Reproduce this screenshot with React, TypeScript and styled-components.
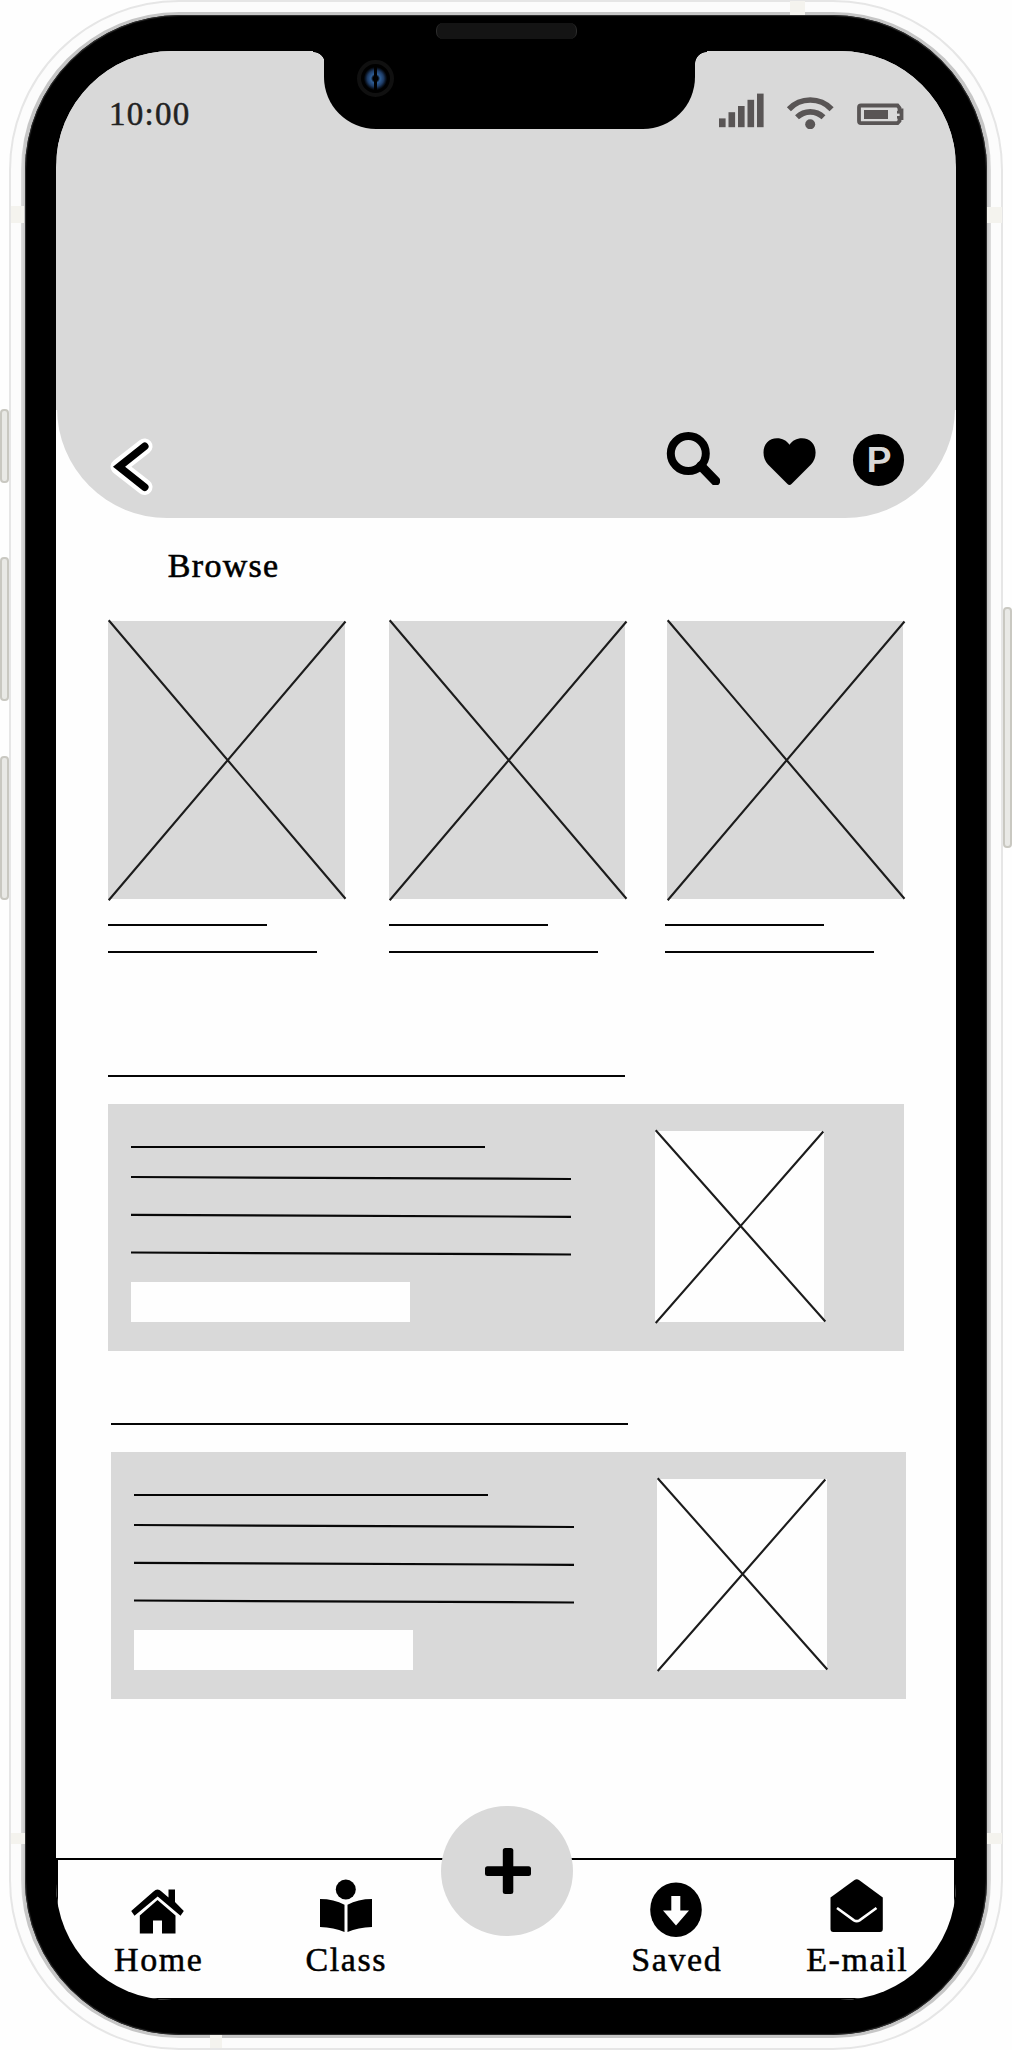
import React from "react";
import styled, { createGlobalStyle } from "styled-components";

const GREY = "#d9d9d9";
const STATUS = "#595555";

const GlobalStyle = createGlobalStyle`
  *, *::before, *::after { box-sizing: border-box; }
  body { margin: 0; background: #fefefe; font-family: "Liberation Serif", serif; }
  svg { display: block; flex: none; }
`;

const Page = styled.main`
  position: relative;
  width: 1012px;
  height: 2050px;
  padding: 0 9px;
  overflow: hidden;
`;

const Frame = styled.div`
  width: 994px;
  height: 2050px;
  padding: 10px;
  border: 2px solid #e6e6e6;
  border-radius: 170px;
  background: #fcfcfc;
`;

const Rim = styled.div`
  height: 2026px;
  padding: 3px 4px;
  border-radius: 158px;
  background: linear-gradient(90deg, #dedede, #c6c6c6 4px, #c6c6c6 966px, #dedede);
`;

const Bezel = styled.div`
  position: relative;
  height: 2020px;
  padding: 36px 31px 35px;
  border-radius: 155px;
  background: #000;
  box-shadow: inset 0 0 1px 1px #303030;
`;

const Screen = styled.div`
  display: flex;
  flex-direction: column;
  width: 900px;
  height: 1949px;
  overflow: hidden;
  border-radius: 116px;
  background: linear-gradient(${GREY} 359px, #fefefe 359px 1810px, #000 1810px);
`;

const SideButton = styled.div<{ $top: number; $height: number; $right?: boolean }>`
  position: absolute;
  top: ${(p) => p.$top}px;
  ${(p) => (p.$right ? "left: 1003px;" : "left: 0;")}
  width: 9px;
  height: ${(p) => p.$height}px;
  border: 2px solid #c9c8c1;
  border-radius: 4px;
  background: #e9e9e6;
`;

const Band = styled.div<{ $x: number; $y: number; $w: number; $h: number }>`
  position: absolute;
  left: ${(p) => p.$x}px;
  top: ${(p) => p.$y}px;
  width: ${(p) => p.$w}px;
  height: ${(p) => p.$h}px;
  background: #f4f3ee;
`;

const Notch = styled.div`
  position: absolute;
  top: 35px;
  left: 299px;
  width: 371px;
  height: 78.5px;
  border-radius: 0 0 52px 52px;
  background: #000;
  &::before, &::after {
    content: "";
    position: absolute;
    top: 1px;
    width: 12px;
    height: 13px;
  }
  &::before {
    left: -11.5px;
    background: radial-gradient(circle at 0 100%, transparent 11.5px, #000 12.2px);
  }
  &::after {
    right: -11.5px;
    background: radial-gradient(circle at 100% 100%, transparent 11.5px, #000 12.2px);
  }
`;

const Speaker = styled.div`
  position: absolute;
  top: 8px;
  left: 411px;
  width: 141px;
  height: 16px;
  border: solid #2c2c2c;
  border-width: 0 1px;
  border-radius: 7px;
  background: #141414;
  z-index: 1;
`;

const Camera = styled.div`
  position: absolute;
  top: 10px;
  left: 33px;
  width: 37px;
  height: 37px;
  padding: 3px;
  border: 4px solid #101010;
  border-radius: 50%;
`;

const Lens = styled.div`
  height: 23px;
  border-radius: 50%;
  background:
    radial-gradient(circle, #000 2.5px, transparent 4.5px),
    linear-gradient(90deg, transparent 9.5px, #000 10.5px 12.5px, transparent 13.5px),
    radial-gradient(circle, #2d5a90 5px, #1e3c66 8px, #08101c 10.5px, #000 12px);
`;

const Hero = styled.header`
  display: flex;
  flex-direction: column;
  justify-content: space-between;
  flex: none;
  height: 467px;
  margin: 0 1px;
  border-radius: 0 0 110px 110px;
  background: ${GREY};
`;

const UpperScreen = styled.div`
  flex: 1;
  background: linear-gradient(transparent 359px, #fefefe 359px);
`;

const StatusBar = styled.div`
  display: flex;
  align-items: flex-start;
  justify-content: space-between;
  padding: 40px 51px 0 52px;
`;

const Time = styled.time`
  padding-top: 4px;
  font-size: 33px;
  line-height: 38px;
  letter-spacing: 1.3px;
  color: #222;
  -webkit-text-stroke: 0.5px #222;
`;

const StatusIcons = styled.div`
  display: flex;
  gap: 20px;
`;

const HeroActions = styled.div`
  display: flex;
  align-items: flex-start;
  justify-content: space-between;
  height: 87px;
  padding: 0 51px 0 48px;
`;

const ActionGroup = styled.div`
  display: flex;
  gap: 41.5px;
`;

const IconButton = styled.button<{ $drop?: number }>`
  padding: ${(p) => p.$drop ?? 0}px 0 0;
  border: 0;
  background: none;
  color: #000;
`;

const PBadge = styled.span`
  display: flex;
  align-items: center;
  justify-content: center;
  width: 51.5px;
  height: 51.5px;
  margin: 3px 0 0 -4.5px;
  padding-left: 2px;
  border-radius: 50%;
  background: #000;
  color: ${GREY};
  font: 600 34px/52px Inter, sans-serif;
`;

const PLetter = styled.span`
  transform: scaleX(1.17);
`;

const Content = styled.section`
  padding: 0 0 0 52.3px;
`;

const Heading = styled.h1`
  margin: 29px 0 0 59.500px;
  font-size: 34px;
  font-weight: 400;
  line-height: 38px;
  letter-spacing: 1.3px;
  color: #000;
  -webkit-text-stroke: 0.6px #000;
`;

const Gallery = styled.div`
  display: grid;
  grid-template-columns: 280.7px 278px 237px;
  margin-top: 35.7px;
`;

const Card = styled.article`
  display: flex;
  flex-direction: column;
`;

const Placeholder = styled.div<{ $w: number; $h: number; $light?: boolean }>`
  flex: none;
  width: ${(p) => p.$w}px;
  height: ${(p) => p.$h}px;
  background: ${(p) => (p.$light ? "#fefefe" : GREY)};
  svg { overflow: visible; }
`;

const Captions = styled.div<{ $shift?: number }>`
  display: flex;
  flex-direction: column;
  gap: 25.2px;
  margin: 25.3px 0 0 ${(p) => p.$shift ?? 0}px;
`;

const Rule = styled.div<{ $w: number }>`
  width: ${(p) => p.$w}px;
  height: 2px;
  background: #050505;
`;

const Feature = styled.article<{ $gap: number; $shift?: number }>`
  display: flex;
  flex-direction: column;
  gap: 27.200px;
  margin: ${(p) => p.$gap}px 0 0 ${(p) => p.$shift ?? 0}px;
`;

const Panel = styled.div`
  display: flex;
  align-items: flex-start;
  width: 795.7px;
  height: 247.3px;
  padding: 27px 0 0 23px;
  background: ${GREY};
`;

const PanelText = styled.div`
  display: flex;
  flex-direction: column;
  width: 523.7px;
  padding-top: 15.3px;
`;

const Slants = styled.svg`
  margin-top: 26.700px;
  overflow: visible;
`;

const Field = styled.div`
  width: 279px;
  height: 40px;
  margin-top: 27px;
  background: #fefefe;
`;

const TabBar = styled.nav`
  position: relative;
  display: grid;
  grid-template-columns: 200px 175px 155px 176px 185px;
  flex: none;
  height: 142px;
  border: 2px solid #000;
  background: #fefefe;
`;

const Tab = styled.a<{ $column: number }>`
  grid-column: ${(p) => p.$column};
  display: flex;
  flex-direction: column;
  align-items: center;
  padding-top: 17.5px;
`;

const TabLabel = styled.span`
  margin-top: 3.5px;
  font-size: 34px;
  line-height: 38px;
  letter-spacing: 1.6px;
  margin-right: -1.6px;
  color: #000;
  -webkit-text-stroke: 0.5px #000;
`;

const AddButton = styled.button`
  position: absolute;
  top: -54.5px;
  left: 383px;
  display: flex;
  align-items: center;
  justify-content: center;
  width: 132px;
  height: 130.5px;
  padding: 0 0 0 1px;
  border: 0;
  border-radius: 50%;
  background: ${GREY};
`;

const Crossed = ({ w, h, light }: { w: number; h: number; light?: boolean }) => (
  <Placeholder $w={w} $h={h} $light={light}>
    <svg width={w} height={h} stroke="#1c1c1c" strokeWidth="2.1">
      <path d={`M.7 -.8L${w + 1} ${h - 0.5}M${w + (light ? -1 : 1)} .5L.7 ${h + 1}`} />
    </svg>
  </Placeholder>
);

const Signal = () => (
  <svg width="46" height="38" fill={STATUS}>
    {[0, 1, 2, 3, 4].map((i) => (
      <rect key={i} x={i * 9.5} y={27.4 - i * 6.2} width="6.6" height={8.8 + i * 6.2} />
    ))}
  </svg>
);

const Wifi = () => (
  <svg width="50" height="38" fill="none" stroke={STATUS} strokeWidth="5.6">
    <path d="M3.9 18.2C15.500 6 35 6 46.600 18.200" />
    <path d="M12 26.300C19.500 19 31 19 38.500 26.300" />
    <circle cx="25.200" cy="33.300" r="5" fill={STATUS} stroke="none" />
  </svg>
);

const Battery = () => (
  <svg width="49" height="38" fill={STATUS}>
    <path
      d="M6 14.500H42.500L44.500 17V19.500H46.500V27H44.500V30L42.500 32.200H6Q4 32.200 4 30V16.500Q4 14.500 6 14.500Z"
      fill="none"
      stroke={STATUS}
      strokeWidth="3.800"
    />
    <rect x="9" y="19" width="24" height="9" />
    <rect x="42" y="20" width="4" height="2.600" />
    <rect x="42" y="25" width="4" height="2.600" />
  </svg>
);

const BackArrow = () => (
  <svg width="48" height="60" viewBox="105 437 48 60" fill="none" strokeLinecap="round">
    <path d="M144.500 446.500L118.500 466.700L144.500 487" stroke="#fff" strokeWidth="16" strokeLinejoin="round" />
    <path d="M144.800 446.300L119 466.700L144.800 487.200" stroke="#000" strokeWidth="7.500" />
  </svg>
);

const SearchIcon = () => (
  <svg width="54" height="54" viewBox="666 431 54 54" fill="none" stroke="#000">
    <circle cx="688.300" cy="453.500" r="17.500" strokeWidth="8" />
    <path d="M701 466L715.500 481" strokeWidth="9.500" strokeLinecap="round" />
  </svg>
);

const Heart = () => (
  <svg width="54" height="54" viewBox="762 431 54 54">
    <path d="M789.500 485Q788.500 485 787.500 484L768 464.500Q763.500 459.500 763.500 452.500C763.500 444 769 438.300 777 438.300C782.500 438.300 786.500 440.500 789.500 444.800C792.500 440.500 796.500 438.300 802 438.300C810 438.300 815.600 444 815.600 452.500Q815.600 459.500 811 464.500L791.500 484Q790.500 485 789.500 485Z" />
  </svg>
);

const HomeIcon = () => (
  <svg width="56" height="60" viewBox="130 1877 56 60">
    <path d="M168.500 1888.500H175V1901L183.800 1910L180.500 1914.800L157.700 1895.500L134.500 1914.800L131.200 1910L153.500 1890.500Q157.500 1886.500 161.500 1890.500L168.500 1896.500Z" />
    <path d="M157.500 1899L175.500 1914.500V1932.500H162V1919.500H153V1932.500H139.800V1914.500Z" />
  </svg>
);

const ReaderIcon = () => (
  <svg width="56" height="60" viewBox="318 1877 56 60">
    <circle cx="345.800" cy="1888.500" r="10" />
    <path d="M320 1898Q334 1898 344.500 1903.700V1931Q334 1926.500 320 1926Z" />
    <path d="M372 1898Q358 1898 347.500 1903.700V1931Q358 1926.500 372 1926Z" />
  </svg>
);

const DownloadIcon = () => (
  <svg width="56" height="60" viewBox="648 1877 56 60">
    <ellipse cx="676" cy="1908.800" rx="25.800" ry="27.300" />
    <path d="M671.300 1895H680.300V1909.500H689L676 1924.500L663 1909.500H671.300Z" fill="#fefefe" />
  </svg>
);

const MailIcon = () => (
  <svg width="56" height="60" viewBox="829 1877 56 60">
    <path d="M854.500 1879Q856.700 1877.500 859 1879L882.800 1896.500V1928Q882.800 1931 880 1931H833.300Q830.500 1931 830.500 1928V1896.500Z" />
    <path d="M837 1907L854 1919.300Q856.700 1921 859.500 1919.300L876.500 1907" fill="none" stroke="#fefefe" strokeWidth="2.600" />
  </svg>
);

const PlusIcon = () => (
  <svg width="48" height="48">
    <rect x="18.800" y="1" width="10.500" height="46" rx="2.500" />
    <rect x="1" y="19.200" width="46" height="9.800" rx="2.500" />
  </svg>
);

const tabs = [
  { label: "Home", column: 1, Icon: HomeIcon },
  { label: "Class", column: 2, Icon: ReaderIcon },
  { label: "Saved", column: 4, Icon: DownloadIcon },
  { label: "E-mail", column: 5, Icon: MailIcon },
];

const FeatureBlock = ({ gap, shift }: { gap: number; shift?: number }) => (
  <Feature $gap={gap} $shift={shift}>
    <Rule $w={517} />
    <Panel>
      <PanelText>
        <Rule $w={354} />
        <Slants width="440" height="80" stroke="#080808" strokeWidth="2.200">
          {[2, 39.800, 77.500].map((y) => (
            <path key={y} d={`M0 ${y}L440 ${y + 2}`} />
          ))}
        </Slants>
        <Field />
      </PanelText>
      <Crossed w={169.3} h={191} light />
    </Panel>
  </Feature>
);

export default function App() {
  return (
    <>
      <GlobalStyle />
      <Page>
        <Frame>
          <Rim>
            <Bezel>
              <Screen>
                <UpperScreen>
                  <Hero>
                    <StatusBar>
                      <Time>10:00</Time>
                      <StatusIcons>
                        <Signal />
                        <Wifi />
                        <Battery />
                      </StatusIcons>
                    </StatusBar>
                    <HeroActions>
                      <IconButton aria-label="Back" $drop={6}><BackArrow /></IconButton>
                      <ActionGroup>
                        <IconButton aria-label="Search"><SearchIcon /></IconButton>
                        <IconButton aria-label="Favourites"><Heart /></IconButton>
                        <PBadge><PLetter>P</PLetter></PBadge>
                      </ActionGroup>
                    </HeroActions>
                  </Hero>
                  <Content>
                    <Heading>Browse</Heading>
                    <Gallery>
                      {[0, 0, -2].map((shift, i) => (
                        <Card key={i}>
                          <Crossed w={236.5} h={278.3} />
                          <Captions $shift={shift}>
                            <Rule $w={159} />
                            <Rule $w={209} />
                          </Captions>
                        </Card>
                      ))}
                    </Gallery>
                    <FeatureBlock gap={121.3} />
                    <FeatureBlock gap={71.3} shift={2.3} />
                  </Content>
                </UpperScreen>
                <TabBar>
                  {tabs.map(({ label, column, Icon }) => (
                    <Tab key={label} $column={column}>
                      <Icon />
                      <TabLabel>{label}</TabLabel>
                    </Tab>
                  ))}
                  <AddButton aria-label="Add"><PlusIcon /></AddButton>
                </TabBar>
              </Screen>
              <Speaker />
              <Notch>
                <Camera><Lens /></Camera>
              </Notch>
            </Bezel>
          </Rim>
        </Frame>
        <Band $x={11} $y={206} $w={13} $h={17} />
        <Band $x={987} $y={207} $w={15} $h={16} />
        <Band $x={790} $y={1} $w={15} $h={14} />
        <Band $x={11} $y={1833} $w={14} $h={11} />
        <Band $x={987} $y={1833} $w={15} $h={11} />
        <Band $x={210} $y={2035} $w={12} $h={13} />
        <SideButton $top={409} $height={74} />
        <SideButton $top={557} $height={144} />
        <SideButton $top={756} $height={144} />
        <SideButton $top={607} $height={241} $right />
      </Page>
    </>
  );
}
